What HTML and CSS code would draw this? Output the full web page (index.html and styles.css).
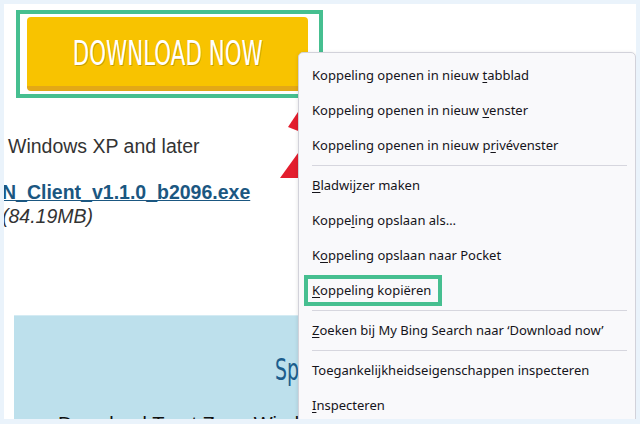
FILE: index.html
```html
<!DOCTYPE html>
<html lang="nl">
<head>
<meta charset="utf-8">
<title>Download</title>
<link rel="stylesheet" href="styles.css">
</head>
<body>
<div class="viewport">
  <div class="page">
    <div class="cta-frame">
      <a class="cta" href="#"><span class="cta-label">DOWNLOAD NOW</span></a>
    </div>
    <p class="os">Windows XP and later</p>
    <div class="file">
      <a class="file-link" href="#">N_Client_v1.1.0_b2096.exe</a><br>
      <span class="file-size">(84.19MB)</span>
    </div>
    <section class="specs">
      <h2 class="specs-title"><span class="specs-title-text">Specifications</span></h2>
      <p class="specs-text">Download Trust Zone Windows client</p>
    </section>
  </div>

  <svg class="arrow" width="30" height="80" viewBox="0 0 30 80">
    <polygon points="26,5 14,23 28,28.6" fill="#e31e2e"/>
    <polygon points="28,43.4 6,74 28,74" fill="#e31e2e"/>
  </svg>

  <div class="menu">
    <div class="item">Koppeling openen in nieuw <u>t</u>abblad</div>
    <div class="item">Koppeling openen in nieuw <u>v</u>enster</div>
    <div class="item">Koppeling openen in nieuw p<u>r</u>ivévenster</div>
    <div class="sep"></div>
    <div class="item"><u>B</u>ladwijzer maken</div>
    <div class="item">Koppe<u>l</u>ing opslaan als…</div>
    <div class="item">K<u>o</u>ppeling opslaan naar Pocket</div>
    <div class="item"><span class="hl"><u>K</u>oppeling kopiëren</span></div>
    <div class="sep"></div>
    <div class="item"><u>Z</u>oeken bij My Bing Search naar ‘Download now’</div>
    <div class="sep"></div>
    <div class="item">Toegankelijkheidseigenschappen inspecteren</div>
    <div class="item"><u>I</u>nspecteren</div>
  </div>
</div>
</body>
</html>
```
FILE: styles.css
```css
html, body {
  margin: 0;
  padding: 0;
}
body {
  background: #eaf3fb;
  width: 640px;
  height: 424px;
  overflow: hidden;
}
.viewport {
  position: relative;
  margin: 4px 0 0 4px;
  width: 632px;
  height: 415px;
  background: #ffffff;
  overflow: hidden;
  font-family: "Liberation Sans", Arial, sans-serif;
}
.page {
  display: flow-root;
}
.cta-frame {
  margin: 6px 0 0 12px;
  width: 307px;
  height: 88px;
  box-sizing: border-box;
  border: 4px solid #46bf90;
  padding: 3px 11px 3px 7px;
}
.cta {
  display: flex;
  align-items: center;
  justify-content: center;
  box-sizing: border-box;
  height: 74px;
  padding-top: 3px;
  background: #f8c300;
  border-bottom: 5px solid #e3a817;
  border-radius: 4px;
  text-decoration: none;
}
.cta-label {
  display: inline-block;
  font-family: "DejaVu Sans Condensed", "DejaVu Sans", sans-serif;
  font-stretch: condensed;
  font-size: 34px;
  line-height: 40px;
  color: #ffffff;
  transform: scaleX(0.7);
  text-shadow: 1px 1px 0 rgba(110, 80, 0, 0.35);
  white-space: nowrap;
}
.os {
  margin: 37px 0 0 4px;
  font-size: 19.5px;
  line-height: 22px;
  color: #333333;
}
.file {
  margin: 22.5px 0 0 -2px;
  font-size: 19.5px;
  line-height: 24px;
  white-space: nowrap;
}
.file-link {
  font-weight: bold;
  color: #1b5781;
  text-decoration: underline;
}
.file-size {
  font-style: italic;
  color: #333333;
}
.specs {
  margin: 87.5px 0 0 10px;
  width: 284px;
  height: 200px;
  overflow: hidden;
  background: #bde0ec;
  border-top: 1px solid #d4ebf3;
}
.specs-title {
  margin: 0;
  padding: 35.6px 0 0 261px;
  font-family: "DejaVu Sans Condensed", "DejaVu Sans", sans-serif;
  font-stretch: condensed;
  font-weight: normal;
  font-size: 30px;
  line-height: 36px;
  color: #1b5d8c;
  white-space: nowrap;
}
.specs-title-text {
  display: inline-block;
  transform: scaleX(0.7);
  transform-origin: left center;
  white-space: nowrap;
}
.specs-text {
  margin: 24px 0 0 44px;
  font-size: 20px;
  line-height: 24px;
  color: #111111;
  white-space: nowrap;
}
.arrow {
  position: absolute;
  left: 270px;
  top: 100px;
}
.menu {
  position: absolute;
  left: 294px;
  top: 48px;
  width: 338px;
  height: 400px;
  box-sizing: border-box;
  padding-top: 4.5px;
  background: #f9f9fb;
  border: 1px solid #d2d2da;
  border-radius: 5px;
  box-shadow: 0 1px 4px rgba(0, 0, 0, 0.12);
  font-family: "Noto Sans", "Open Sans", sans-serif;
  font-size: 13px;
  color: #15141a;
}
.item {
  display: block;
  height: 35px;
  line-height: 35px;
  padding-left: 13px;
  white-space: nowrap;
}
.item u {
  text-decoration-thickness: 1px;
  text-underline-offset: 2px;
}
.sep {
  height: 1px;
  margin: 2px 8px 2px 13px;
  background: #d6d6de;
}
.hl {
  position: relative;
  display: inline-block;
  line-height: 18px;
}
.hl::after {
  content: "";
  position: absolute;
  left: -8px;
  right: -11px;
  top: -6px;
  bottom: -7px;
  border: 4px solid #46bf90;
}
```
